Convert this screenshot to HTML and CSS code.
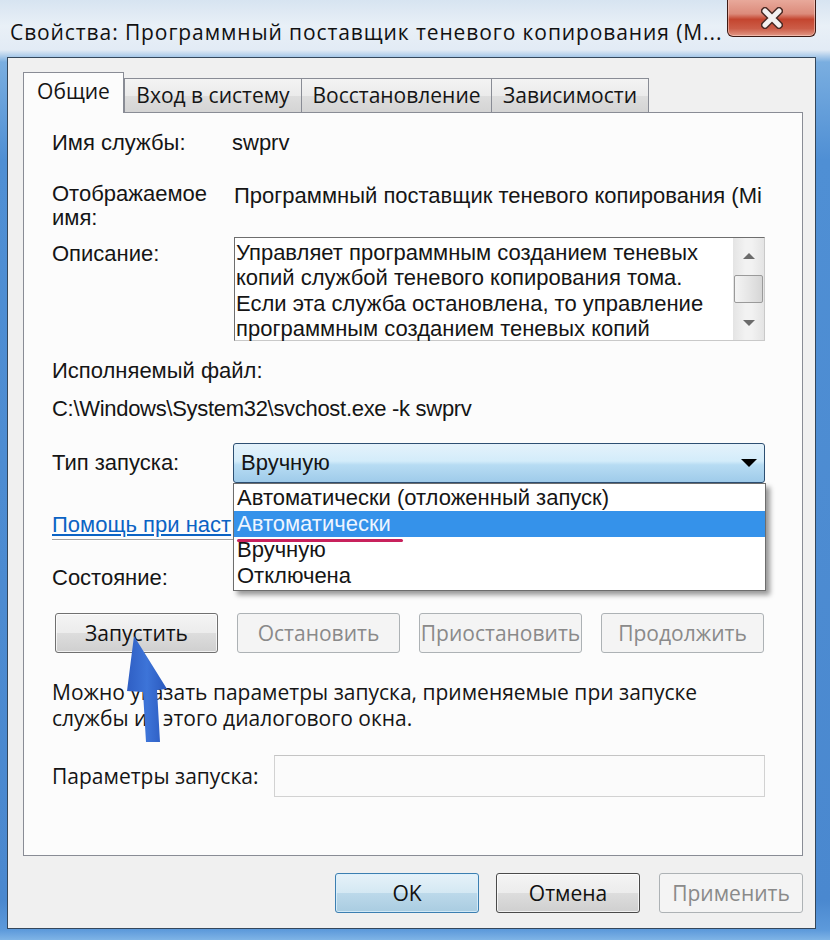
FILE: index.html
```html
<!DOCTYPE html>
<html lang="ru">
<head>
  <meta charset="UTF-8">
  <meta name="viewport" content="width=device-width, initial-scale=1.0">
  <title>Свойства: Программный поставщик теневого копирования</title>
  <link rel="stylesheet" href="styles.css">
</head>
<body>
  <div class="window">
    <div class="titlebar">
      <span class="title">Свойства: Программный поставщик теневого копирования (M...</span>
      <div class="close-btn">
        <svg width="22" height="22" viewBox="0 0 22 22">
          <path d="M4 4 L18 18 M18 4 L4 18" stroke="#4a2a24" stroke-width="8" stroke-linecap="round"/>
          <path d="M4 4 L18 18 M18 4 L4 18" stroke="#f4f1f0" stroke-width="5" stroke-linecap="round"/>
        </svg>
      </div>
    </div>

    <div class="client">
      <div class="tabs">
        <div class="tab active">Общие</div>
        <div class="tab tab-login">Вход в систему</div>
        <div class="tab tab-recovery">Восстановление</div>
        <div class="tab tab-deps">Зависимости</div>
      </div>

      <div class="panel">
        <div class="row row-name">
          <div class="label">Имя службы:</div>
          <div class="value value-name">swprv</div>
        </div>

        <div class="row row-display">
          <div class="label">Отображаемое<br>имя:</div>
          <div class="value value-display">Программный поставщик теневого копирования (Mi</div>
        </div>

        <div class="row row-desc">
          <div class="label">Описание:</div>
          <div class="desc-box">
            <div class="desc-text">Управляет программным созданием теневых<br>копий службой теневого копирования тома.<br>Если эта служба остановлена, то управление<br>программным созданием теневых копий</div>
            <div class="scrollbar">
              <div class="scroll-btn"><span class="tri-up"></span></div>
              <div class="scroll-thumb"></div>
              <div class="scroll-space"></div>
              <div class="scroll-btn scroll-btn-down"><span class="tri-down"></span></div>
            </div>
          </div>
        </div>

        <div class="exe-label">Исполняемый файл:</div>
        <div class="exe-path">C:\Windows\System32\svchost.exe -k swprv</div>

        <div class="row row-type">
          <div class="label">Тип запуска:</div>
          <div class="combo-wrap">
            <div class="combo">
              <span>Вручную</span>
              <span class="combo-arrow"></span>
            </div>
            <div class="dropdown">
              <div class="dropdown-item">Автоматически (отложенный запуск)</div>
              <div class="dropdown-item selected">Автоматически</div>
              <div class="dropdown-item">Вручную</div>
              <div class="dropdown-item">Отключена</div>
              <div class="red-mark"></div>
            </div>
          </div>
        </div>

        <a class="help-link" href="#">Помощь при наст</a>
        <div class="separator"></div>

        <div class="state">Состояние:</div>

        <div class="service-buttons">
          <div class="btn">Запустить</div>
          <div class="btn disabled">Остановить</div>
          <div class="btn disabled">Приостановить</div>
          <div class="btn disabled">Продолжить</div>
        </div>

        <div class="hint">Можно указать параметры запуска, применяемые при запуске<br>службы из этого диалогового окна.</div>

        <div class="row row-params">
          <div class="label">Параметры запуска:</div>
          <div class="params-input"></div>
        </div>
      </div>

      <div class="footer">
        <div class="btn btn-default">OK</div>
        <div class="btn btn-cancel">Отмена</div>
        <div class="btn disabled">Применить</div>
      </div>
    </div>

    <svg class="pointer-arrow" width="60" height="120" viewBox="120 630 60 120">
      <defs>
        <linearGradient id="arrowFill" x1="0" y1="0" x2="1" y2="0">
          <stop offset="0" stop-color="#2f5fc4"/>
          <stop offset="0.5" stop-color="#3d74d8"/>
          <stop offset="1" stop-color="#2a58bd"/>
        </linearGradient>
      </defs>
      <polygon points="134,636 167,689 157,690 160,742 146,742 143,692 127,691" fill="url(#arrowFill)"/>
    </svg>
  </div>
</body>
</html>
```

FILE: styles.css
```css
* {
  box-sizing: border-box;
}
body {
  margin: 0;
  width: 830px;
  height: 940px;
  overflow: hidden;
  font-family: "Liberation Sans", Arial, sans-serif;
  font-size: 22px;
  color: #151515;
}
.window {
  position: relative;
  width: 830px;
  height: 940px;
  background: linear-gradient(to bottom, #d7e4f1 0, #e9f0f7 26px, #e2ebf5 50px, #7aaee0 62px, #4f8fd4 160px, #4a88cf 900px, #5d9adb 930px, #7fb4e6 940px);
}
.titlebar {
  display: flex;
  height: 57px;
  padding-left: 10px;
  padding-right: 14px;
}
.title {
  flex: 1;
  padding-top: 7px;
  line-height: 50px;
  font-family: "Open Sans", sans-serif;
  font-size: 21px;
  letter-spacing: 0.9px;
  color: #111;
  white-space: nowrap;
  overflow: hidden;
}
.close-btn {
  width: 89px;
  height: 38px;
  margin-top: -1px;
  border: 1px solid #3d1a14;
  border-top: none;
  border-radius: 0 0 6px 6px;
  background: linear-gradient(to bottom, #e9ab9d 0, #dc8b7b 40%, #c4452f 55%, #cc5d48 80%, #e29886 100%);
  box-shadow: inset 0 0 0 1px rgba(255, 220, 210, 0.5);
  display: flex;
  align-items: center;
  justify-content: center;
}
.client {
  margin-left: 7px;
  width: 809px;
  height: 872px;
  border: 1px solid #34475b;
  background: #f0f0f0;
  padding: 14px 12px 15px 15px;
}

/* tabs */
.tabs {
  display: flex;
  align-items: flex-end;
  height: 40px;
}
.tab {
  height: 34px;
  border: 1px solid #898c95;
  border-bottom: none;
  background: linear-gradient(to bottom, #f3f3f3 0, #ebebeb 50%, #dedede 51%, #d4d4d4 100%);
  font-family: "Open Sans", sans-serif;
  font-size: 21px;
  line-height: 32px;
  text-align: center;
  white-space: nowrap;
}
.tab.active {
  position: relative;
  z-index: 1;
  width: 101px;
  height: 41px;
  margin-bottom: -1px;
  background: #fcfcfc;
  line-height: 36px;
}
.tab-login {
  width: 178px;
}
.tab-recovery {
  width: 191px;
  margin-left: -1px;
}
.tab-deps {
  width: 158px;
  margin-left: -1px;
}

/* general page */
.panel {
  height: 744px;
  border: 1px solid #898c95;
  background: #fcfcfc;
  padding: 18px 37px 0 28px;
}
.row {
  display: grid;
  grid-template-columns: 182px 1fr;
  line-height: 24px;
}
.value-name {
  margin-left: -2px;
}
.row-display {
  margin-top: 27px;
}
.value-display {
  padding-top: 2px;
  white-space: nowrap;
}
.row-desc {
  margin-top: 7px;
}
.row-desc .label {
  padding-top: 5px;
}
.desc-box {
  display: flex;
  height: 104px;
  border: 1px solid #c9c9c9;
  border-top-color: #6e6e6e;
  border-left-color: #6e6e6e;
  background: #fff;
}
.desc-text {
  flex: 1;
  padding: 2px 0 0 1px;
  line-height: 25.3px;
  white-space: nowrap;
}
.scrollbar {
  width: 31px;
  display: flex;
  flex-direction: column;
  background: linear-gradient(to right, #e4e4e4, #f2f2f2 40%, #f2f2f2 60%, #e4e4e4);
}
.scroll-btn {
  height: 35px;
  display: flex;
  align-items: center;
  justify-content: center;
}
.scroll-btn-down {
  height: 34px;
}
.tri-up,
.tri-down {
  width: 0;
  height: 0;
  border-left: 6px solid transparent;
  border-right: 6px solid transparent;
}
.tri-up {
  border-bottom: 6px solid #6b6b6b;
}
.tri-down {
  border-top: 6px solid #6b6b6b;
}
.scroll-thumb {
  height: 28px;
  margin: 2px 1px 0;
  border: 1px solid #9a9a9a;
  border-radius: 2px;
  background: linear-gradient(to right, #f4f4f4, #e6e6e6 50%, #d6d6d6);
}
.scroll-space {
  flex: 1;
}
.exe-label {
  margin-top: 18px;
  line-height: 24px;
}
.exe-path {
  margin-top: 14px;
  line-height: 24px;
  letter-spacing: -0.3px;
}
.row-type {
  margin-top: 22px;
  align-items: center;
}
.combo-wrap {
  position: relative;
  margin-left: -1px;
}
.combo {
  height: 40px;
  border: 1px solid #2d4f72;
  border-radius: 3px;
  background: linear-gradient(to bottom, #e4f2fb 0, #d3ecfa 45%, #b7dcf3 55%, #9fcbea 100%);
  display: flex;
  align-items: center;
  justify-content: space-between;
  padding: 0 7px 0 7px;
}
.combo-arrow {
  width: 0;
  height: 0;
  border-left: 8px solid transparent;
  border-right: 8px solid transparent;
  border-top: 8px solid #000;
}
.dropdown {
  position: absolute;
  z-index: 2;
  top: 40px;
  left: 0;
  width: 533px;
  height: 108px;
  border: 1px solid #6d6d6d;
  background: #fff;
  box-shadow: 4px 4px 5px rgba(0, 0, 0, 0.4);
  padding-top: 1px;
}
.dropdown-item {
  height: 26px;
  line-height: 26px;
  padding-left: 3px;
  white-space: nowrap;
}
.dropdown-item.selected {
  background: #3592ea;
  color: #eef5ff;
}
.red-mark {
  position: absolute;
  left: 3px;
  top: 55px;
  width: 166px;
  height: 3px;
  border-radius: 2px;
  background: #c8215c;
}
.help-link {
  display: block;
  width: 181px;
  margin-top: 30px;
  line-height: 24px;
  color: #0b63c4;
  white-space: nowrap;
}
.separator {
  margin-top: 2px;
  border-top: 1px solid #a0a0a0;
  border-bottom: 1px solid #ffffff;
}
.state {
  margin-top: 25px;
  line-height: 24px;
}

/* buttons */
.btn {
  height: 40px;
  border: 1px solid #707070;
  border-radius: 3px;
  background: linear-gradient(to bottom, #f4f4f4 0, #ececec 50%, #dddddd 51%, #cfcfcf 100%);
  box-shadow: inset 0 0 0 1px rgba(255, 255, 255, 0.7);
  font-family: "Open Sans", sans-serif;
  font-size: 21px;
  line-height: 38px;
  text-align: center;
  color: #111;
  white-space: nowrap;
}
.btn.disabled {
  border-color: #adb2b5;
  background: #f4f4f4;
  box-shadow: none;
  color: #8a8a8a;
}
.service-buttons {
  display: flex;
  gap: 19px;
  margin-top: 23px;
  padding-left: 3px;
}
.service-buttons .btn {
  width: 163px;
}
.hint {
  margin-top: 26px;
  font-family: "Open Sans", sans-serif;
  font-size: 21px;
  line-height: 26px;
  white-space: nowrap;
}
.row-params {
  grid-template-columns: 222px 1fr;
  margin-top: 24px;
  align-items: center;
}
.row-params .label {
  font-family: "Open Sans", sans-serif;
  font-size: 21px;
}
.params-input {
  height: 42px;
  border: 1px solid #d2d2d2;
  border-top-color: #c4c4c4;
  background: #fbfbfb;
}
.footer {
  display: flex;
  justify-content: flex-end;
  margin-top: 17px;
}
.footer .btn {
  width: 144px;
}
.btn-default {
  margin-right: 17px;
  border-color: #3c7fb1;
  background: linear-gradient(to bottom, #e6f2f9 0, #d4e8f3 50%, #bcd9ea 51%, #a9cce1 100%);
  box-shadow: inset 0 0 0 1px rgba(220, 240, 252, 0.8);
}
.btn-cancel {
  margin-right: 19px;
  border-color: #4a4a4a;
}
.pointer-arrow {
  position: absolute;
  left: 120px;
  top: 630px;
}
```
